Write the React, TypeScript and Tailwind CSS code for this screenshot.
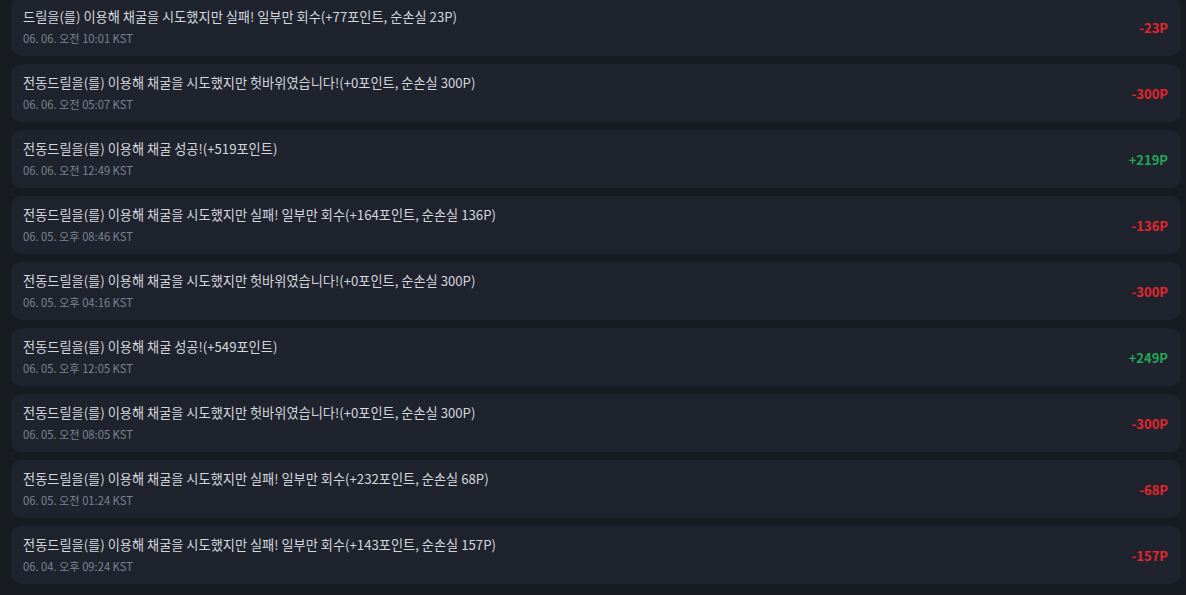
import React from "react";

type Item = { title: string; time: string; amount: string; positive: boolean };

const items: Item[] = [
  { title: "드릴을(를) 이용해 채굴을 시도했지만 실패! 일부만 회수(+77포인트, 순손실 23P)", time: "06. 06. 오전 10:01 KST", amount: "-23P", positive: false },
  { title: "전동드릴을(를) 이용해 채굴을 시도했지만 헛바위였습니다!(+0포인트, 순손실 300P)", time: "06. 06. 오전 05:07 KST", amount: "-300P", positive: false },
  { title: "전동드릴을(를) 이용해 채굴 성공!(+519포인트)", time: "06. 06. 오전 12:49 KST", amount: "+219P", positive: true },
  { title: "전동드릴을(를) 이용해 채굴을 시도했지만 실패! 일부만 회수(+164포인트, 순손실 136P)", time: "06. 05. 오후 08:46 KST", amount: "-136P", positive: false },
  { title: "전동드릴을(를) 이용해 채굴을 시도했지만 헛바위였습니다!(+0포인트, 순손실 300P)", time: "06. 05. 오후 04:16 KST", amount: "-300P", positive: false },
  { title: "전동드릴을(를) 이용해 채굴 성공!(+549포인트)", time: "06. 05. 오후 12:05 KST", amount: "+249P", positive: true },
  { title: "전동드릴을(를) 이용해 채굴을 시도했지만 헛바위였습니다!(+0포인트, 순손실 300P)", time: "06. 05. 오전 08:05 KST", amount: "-300P", positive: false },
  { title: "전동드릴을(를) 이용해 채굴을 시도했지만 실패! 일부만 회수(+232포인트, 순손실 68P)", time: "06. 05. 오전 01:24 KST", amount: "-68P", positive: false },
  { title: "전동드릴을(를) 이용해 채굴을 시도했지만 실패! 일부만 회수(+143포인트, 순손실 157P)", time: "06. 04. 오후 09:24 KST", amount: "-157P", positive: false },
];

export default function App() {
  return (
    <div
      className="w-[1186px] h-[595px] overflow-hidden bg-[#181b22]"
      style={{ fontFamily: '"Noto Sans CJK KR", "Noto Sans", sans-serif' }}
    >
      <div className="flex flex-col gap-[8px] pl-[11px] pr-[5px] -mt-[2px]">
        {items.map((it, i) => (
          <div
            key={i}
            className="h-[58px] rounded-[10px] bg-[#1f232d] flex items-center justify-between pl-[12px] pr-[13px]"
          >
            <div className="flex flex-col mb-[1px]">
              <div className="text-[13.2px] leading-[20px] text-[#d3d7de]">{it.title}</div>
              <div className="mt-[3px] text-[11.2px] leading-[16px] text-[#7b8494]">{it.time}</div>
            </div>
            <div
              className={
                "text-[13px] font-bold mt-[1px] " +
                (it.positive ? "text-[#22a855]" : "text-[#e5262f]")
              }
            >
              {it.amount}
            </div>
          </div>
        ))}
      </div>
    </div>
  );
}
